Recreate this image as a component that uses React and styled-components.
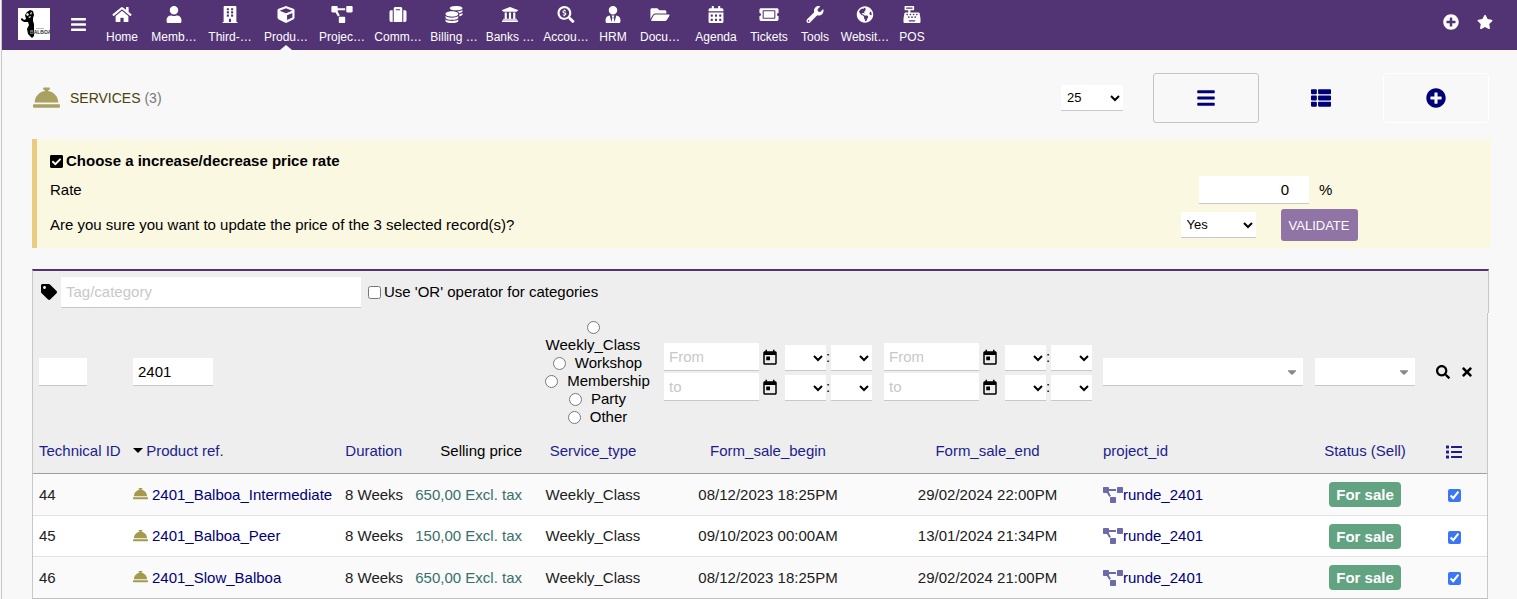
import React, { useState } from "react";
import styled, { createGlobalStyle } from "styled-components";
import {
  FaBars,
  FaBuilding,
  FaCalendarAlt,
  FaCaretDown,
  FaCashRegister,
  FaCheckSquare,
  FaCoins,
  FaConciergeBell,
  FaCube,
  FaFolderOpen,
  FaGlobeAmericas,
  FaHome,
  FaList,
  FaPlusCircle,
  FaProjectDiagram,
  FaSearch,
  FaSearchDollar,
  FaStar,
  FaSuitcase,
  FaTag,
  FaThList,
  FaTicketAlt,
  FaTimes,
  FaUniversity,
  FaUser,
  FaUserTie,
  FaWrench,
} from "react-icons/fa";
import { MdToday } from "react-icons/md";

const MENU = [
  { label: "Home", icon: FaHome, width: 48 },
  { label: "Memb…", icon: FaUser, width: 56 },
  { label: "Third-…", icon: FaBuilding, width: 56 },
  { label: "Produ…", icon: FaCube, width: 56, active: true },
  { label: "Projec…", icon: FaProjectDiagram, width: 56 },
  { label: "Comm…", icon: FaSuitcase, width: 56 },
  { label: "Billing …", icon: FaCoins, width: 56 },
  { label: "Banks …", icon: FaUniversity, width: 56 },
  { label: "Accou…", icon: FaSearchDollar, width: 56 },
  { label: "HRM", icon: FaUserTie, width: 38 },
  { label: "Docu…", icon: FaFolderOpen, width: 56 },
  { label: "Agenda", icon: FaCalendarAlt, width: 56 },
  { label: "Tickets", icon: FaTicketAlt, width: 50 },
  { label: "Tools", icon: FaWrench, width: 42 },
  { label: "Websit…", icon: FaGlobeAmericas, width: 58 },
  { label: "POS", icon: FaCashRegister, width: 36 },
];

const SERVICE_TYPES = ["Weekly_Class", "Workshop", "Membership", "Party", "Other"];

const SERVICES = [
  { id: 44, ref: "2401_Balboa_Intermediate", price: "650,00", begin: "08/12/2023 18:25PM", end: "29/02/2024 22:00PM" },
  { id: 45, ref: "2401_Balboa_Peer", price: "150,00", begin: "09/10/2023 00:00AM", end: "13/01/2024 21:34PM" },
  { id: 46, ref: "2401_Slow_Balboa", price: "650,00", begin: "08/12/2023 18:25PM", end: "29/02/2024 21:00PM" },
];

export default function App() {
  const [selected, setSelected] = useState([44, 45, 46]);

  const toggle = (id) =>
    setSelected(selected.includes(id) ? selected.filter((s) => s !== id) : [...selected, id]);

  return (
    <>
      <GlobalStyle />
      <Page>
        <TopBar>
          <Logo />
          <BurgerButton type="button" aria-label="Toggle menu">
            <FaBars />
          </BurgerButton>
          <Menu>
            {MENU.map(({ label, icon: Icon, width, active }) => (
              <MenuItem key={label} href="#" $width={width} $active={active}>
                <Icon />
                <span>{label}</span>
              </MenuItem>
            ))}
          </Menu>
          <TopTools>
            <TopButton type="button" aria-label="Quick add"><FaPlusCircle /></TopButton>
            <TopButton type="button" aria-label="Bookmarks"><FaStar /></TopButton>
          </TopTools>
        </TopBar>

        <Content>
          {/* Title and view modes */}
          <TitleBar>
            <FaConciergeBell />
            <Title>SERVICES <Count>(3)</Count></Title>
            <Select $width={62} aria-label="Rows per page" defaultValue="25">
              <option>25</option>
            </Select>
            <ViewModes>
              <ModeButton type="button" aria-label="List view" $border="#c4c4c4"><FaBars /></ModeButton>
              <ModeButton type="button" aria-label="Kanban view" $border="transparent"><FaThList /></ModeButton>
              <ModeButton type="button" aria-label="New service" $border="#fff"><FaPlusCircle /></ModeButton>
            </ViewModes>
          </TitleBar>

          {/* Mass action confirmation */}
          <Confirm>
            <ConfirmTitle><FaCheckSquare /> Choose a increase/decrease price rate</ConfirmTitle>
            <ConfirmRow $height={36}>
              <label htmlFor="rate">Rate</label>
              <ConfirmFields $gap={10}>
                <RateInput id="rate" defaultValue="0" />
                <Unit>%</Unit>
              </ConfirmFields>
            </ConfirmRow>
            <ConfirmRow $height={34}>
              <label htmlFor="confirm">Are you sure you want to update the price of the 3 selected record(s)?</label>
              <ConfirmFields $gap={25}>
                <Select id="confirm" $width={75} defaultValue="Yes">
                  <option>Yes</option>
                  <option>No</option>
                </Select>
                <ValidateButton type="button">VALIDATE</ValidateButton>
              </ConfirmFields>
            </ConfirmRow>
          </Confirm>

          {/* List */}
          <CategoryBar>
            <FaTag />
            <CategoryInput placeholder="Tag/category" aria-label="Tag/category" />
            <CheckLabel>
              <input type="checkbox" />
              Use 'OR' operator for categories
            </CheckLabel>
          </CategoryBar>
          <Table>
            <colgroup>
              <Col $width={94} />
              <Col $width={212} />
              <Col $width={69} />
              <Col $width={120} />
              <Col $width={130} />
              <Col $width={220} />
              <Col $width={219} />
              <Col />
              <Col $width={112} />
              <Col $width={66} />
            </colgroup>
            <thead>
              <FilterRow>
                <Cell><TextInput $width={48} aria-label="Technical ID" /></Cell>
                <Cell><TextInput $width={80} aria-label="Product ref." defaultValue="2401" /></Cell>
                <Cell />
                <Cell />
                <Cell $align="center">
                  {SERVICE_TYPES.map((type) => (
                    <RadioLabel key={type}>
                      <input type="radio" name="service_type" />{type}
                    </RadioLabel>
                  ))}
                </Cell>
                <Cell><DateRange name="Form_sale_begin" /></Cell>
                <Cell><DateRange name="Form_sale_end" /></Cell>
                <Cell><SearchSelect label="project_id" /></Cell>
                <Cell><SearchSelect label="Status (Sell)" /></Cell>
                <Cell>
                  <FilterActions>
                    <IconButton type="button" aria-label="Search"><FaSearch /></IconButton>
                    <IconButton type="button" aria-label="Clear filters"><FaTimes /></IconButton>
                  </FilterActions>
                </Cell>
              </FilterRow>
              <HeadRow>
                <Cell as="th"><HeadLink href="#">Technical ID</HeadLink></Cell>
                <Cell as="th"><SortArrow /> <HeadLink href="#">Product ref.</HeadLink></Cell>
                <Cell as="th" $align="right"><HeadLink href="#">Duration</HeadLink></Cell>
                <Cell as="th" $align="right">Selling price</Cell>
                <Cell as="th" $align="center"><HeadLink href="#">Service_type</HeadLink></Cell>
                <Cell as="th" $align="center"><HeadLink href="#">Form_sale_begin</HeadLink></Cell>
                <Cell as="th" $align="center"><HeadLink href="#">Form_sale_end</HeadLink></Cell>
                <Cell as="th"><HeadLink href="#">project_id</HeadLink></Cell>
                <Cell as="th" $align="center"><HeadLink href="#">Status (Sell)</HeadLink></Cell>
                <Cell as="th" $align="center"><ColumnsButton type="button" aria-label="Choose columns"><FaList /></ColumnsButton></Cell>
              </HeadRow>
            </thead>
            <tbody>
              {SERVICES.map((s) => (
                <Row key={s.id}>
                  <Cell>{s.id}</Cell>
                  <Cell><RefLink href="#"><FaConciergeBell />{s.ref}</RefLink></Cell>
                  <Cell $align="right">8 Weeks</Cell>
                  <Cell $align="right"><Amount>{s.price} Excl. tax</Amount></Cell>
                  <Cell $align="center">Weekly_Class</Cell>
                  <Cell $align="center">{s.begin}</Cell>
                  <Cell $align="center">{s.end}</Cell>
                  <Cell><ProjectLink href="#"><FaProjectDiagram />runde_2401</ProjectLink></Cell>
                  <Cell $align="center"><Badge>For sale</Badge></Cell>
                  <Cell $align="center">
                    <RowCheck
                      type="checkbox"
                      aria-label={`Select ${s.ref}`}
                      checked={selected.includes(s.id)}
                      onChange={() => toggle(s.id)}
                    />
                  </Cell>
                </Row>
              ))}
            </tbody>
          </Table>
        </Content>
      </Page>
    </>
  );
}

function Logo() {
  return (
    <LogoLink href="#" aria-label="Balboa">
      <svg viewBox="0 0 32 32">
        <rect width="32" height="32" fill="#fff" />
        <path d="M3 11l1-1 2 2 2-1-1-4 2-3 3-2 3 1 1 4-1 3 0 3 1 3v12l-2 2-1-1-3-3-1-5 2-4-1-3-4 0-3-2z" fill="#000" />
        <path d="M8 6l2-1 1 2-2 1zM12 5l2-1-1 3zM10 9l3-1-1 2z" fill="#fff" />
        <path d="M18 20.500h8" stroke="#bbb" strokeWidth="1" />
        <text x="12" y="26" fontSize="5" fontWeight="bold" fontFamily="Liberation Sans, sans-serif" fill="#333">
          <tspan fill="#999">B</tspan>ALBOA
        </text>
      </svg>
    </LogoLink>
  );
}

function DateRange({ name }) {
  return (
    <DateLines>
      {["From", "to"].map((bound) => (
        <DateLine key={bound}>
          <TextInput $width={95} placeholder={bound} aria-label={`${name} ${bound}`} />
          <CalendarButton type="button" aria-label={`Pick ${name} ${bound}`}><MdToday /></CalendarButton>
          <Select $width={41} aria-label={`${name} ${bound} hour`} />
          <Colon>:</Colon>
          <Select $width={41} aria-label={`${name} ${bound} minute`} />
        </DateLine>
      ))}
    </DateLines>
  );
}

function SearchSelect({ label }) {
  return (
    <SearchSelectBox>
      <select aria-label={label} />
      <FaCaretDown />
    </SearchSelectBox>
  );
}

const GlobalStyle = createGlobalStyle`
  * {
    box-sizing: border-box;
  }
  body {
    margin: 0;
    background: #f8f8f8;
    color: #000;
    font: 15px/18px "Liberation Sans", Arial, sans-serif;
  }
  input, select, button {
    font-family: inherit;
    margin: 0;
  }
  button {
    border: 0;
    padding: 0;
    background: none;
    color: #000;
    cursor: pointer;
  }
  a {
    color: #000078;
    text-decoration: none;
  }
  svg {
    display: block;
  }
`;

const Page = styled.div`
  margin-left: 1px;
  border-left: 1px solid #c8c8c8;
`;

const TopBar = styled.header`
  display: flex;
  align-items: center;
  height: 50px;
  padding: 0 24px 0 16px;
  background: #523474;
`;

const LogoLink = styled.a`
  width: 32px;
  margin-right: 20px;
  padding-bottom: 2px;
`;

const BurgerButton = styled.button`
  width: 17px;
  margin-right: 11px;
  padding-bottom: 2px;
  color: #fff;
  font-size: 17px;
`;

const Menu = styled.nav`
  display: flex;
  align-self: stretch;
`;

const MenuItem = styled.a`
  position: relative;
  display: flex;
  flex-direction: column;
  align-items: center;
  gap: 6px;
  width: ${(props) => props.$width}px;
  padding-top: 6px;
  color: #fff;
  font-size: 12px;
  line-height: 16px;
  white-space: nowrap;
  svg {
    width: 22px;
    height: 17px;
  }
  &::after {
    content: "";
    display: ${(props) => (props.$active ? "block" : "none")};
    position: absolute;
    bottom: 0;
    border: 6px solid transparent;
    border-top: 0;
    border-bottom: 5px solid #f8f8f8;
  }
`;

const TopTools = styled.div`
  display: flex;
  gap: 18px;
  margin-left: auto;
  padding-bottom: 6px;
`;

const TopButton = styled.button`
  color: #fff;
  font-size: 16px;
`;

const Content = styled.main`
  padding: 23px 26px 0 30px;
`;

const TitleBar = styled.div`
  display: flex;
  align-items: center;
  margin: 0 2px 16px 0;
  > svg {
    color: #aaa060;
    width: 29px;
    height: 29px;
    margin-right: 9px;
    padding-bottom: 2px;
  }
`;

const Title = styled.h1`
  flex: 1;
  margin: 0;
  color: #4a4408;
  font-size: 14px;
  font-weight: normal;
`;

const Count = styled.span`
  color: #777;
`;

const Select = styled.select`
  width: ${(props) => props.$width}px;
  height: 26px;
  border: 0;
  border-bottom: 1px solid #c8c8c8;
  border-radius: 0;
  padding: 0 2px;
  background-color: #fff;
  color: #000;
  font-size: 13px;
`;

const ViewModes = styled.div`
  display: flex;
  gap: 9px;
  margin-left: 30px;
`;

const ModeButton = styled.button`
  display: flex;
  align-items: center;
  justify-content: center;
  width: 106px;
  height: 50px;
  border: 1px solid ${(props) => props.$border};
  border-radius: 3px;
  color: #000078;
  font-size: 20px;
`;

const Confirm = styled.section`
  margin-bottom: 21px;
  padding: 9px 0 6px 13px;
  border-left: 5px solid #eacb82;
  background: #fbf8e2;
`;

const ConfirmTitle = styled.div`
  display: flex;
  align-items: center;
  gap: 3px;
  height: 26px;
  margin-bottom: -2px;
  font-weight: bold;
  svg {
    width: 13px;
  }
`;

const ConfirmRow = styled.div`
  display: flex;
  align-items: center;
  justify-content: space-between;
  height: ${(props) => props.$height}px;
`;

const ConfirmFields = styled.div`
  display: flex;
  align-items: center;
  justify-content: center;
  gap: ${(props) => props.$gap}px;
  width: 444px;
`;

const TextInput = styled.input`
  display: block;
  width: ${(props) => props.$width}px;
  height: 28px;
  border: 0;
  border-bottom: 1px solid #c8c8c8;
  padding: 0 5px;
  background: #fff;
  color: #000;
  font-size: 15px;
  &::placeholder {
    color: #c8c8c8;
  }
`;

const RateInput = styled(TextInput)`
  width: 110px;
  padding-right: 20px;
  text-align: right;
`;

const Unit = styled.span`
  width: 20px;
`;

const ValidateButton = styled.button`
  width: 77px;
  height: 32px;
  border-radius: 3px;
  background: #9074a5;
  color: #fff;
  font-size: 13px;
`;

const CategoryBar = styled.div`
  display: flex;
  align-items: center;
  height: 44px;
  margin-right: 2px;
  padding-left: 8px;
  border: 1px solid #c8c8c8;
  border-top: 2px solid #523474;
  border-bottom: 0;
  background: #eee;
  > svg {
    font-size: 16px;
    margin-right: 4px;
  }
`;

const CategoryInput = styled(TextInput)`
  width: 300px;
  height: 31px;
`;

const CheckLabel = styled.label`
  display: flex;
  align-items: center;
  gap: 3px;
  margin-left: 7px;
`;

const Table = styled.table`
  width: calc(100% - 3px);
  table-layout: fixed;
  border-collapse: separate;
  border-spacing: 0;
  border: 1px solid #c8c8c8;
  border-top: 0;
  border-bottom: 0;
  thead {
    background: #eee;
  }
`;

const Col = styled.col`
  width: ${(props) => (props.$width ? `${props.$width}px` : "auto")};
`;

const Cell = styled.td`
  padding: 0 6px;
  text-align: ${(props) => props.$align || "left"};
  font-weight: normal;
  white-space: nowrap;
`;

const FilterRow = styled.tr`
  height: 118px;
`;

const HeadRow = styled.tr`
  th {
    height: 43px;
    padding-bottom: 2px;
    border-bottom: 1px solid #a0a0a0;
  }
`;

const SortArrow = styled.span`
  display: inline-block;
  border: 5px solid transparent;
  border-top-color: #000;
  border-bottom: 0;
  margin-right: -1px;
  vertical-align: 3px;
`;

const HeadLink = styled.a`
  color: #1c1c8c;
`;

const Row = styled.tr`
  background: #fafafa;
  color: #202020;
  td {
    height: 42px;
    border-bottom: 1px solid #e2e2e2;
  }
  &:nth-child(even) {
    background: #fff;
    td {
      height: 41px;
    }
  }
  &:last-child td {
    border-bottom-color: #c0c0c0;
  }
`;

const RadioLabel = styled.label`
  display: block;
  white-space: normal;
  input {
    margin: 0 9px 2px;
    vertical-align: middle;
  }
`;

const DateLines = styled.div`
  display: grid;
  gap: 2px;
`;

const DateLine = styled.div`
  display: flex;
  align-items: flex-end;
`;

const CalendarButton = styled.button`
  margin: 0 6px 4px 2px;
  font-size: 18px;
`;

const Colon = styled.span`
  width: 5px;
  padding-bottom: 5px;
`;

const SearchSelectBox = styled.div`
  display: grid;
  align-items: center;
  > * {
    grid-area: 1 / 1;
  }
  select {
    width: 100%;
    height: 28px;
    appearance: none;
    border: 0;
    border-bottom: 1px solid #c8c8c8;
    border-radius: 0;
    background: #fff;
  }
  svg {
    justify-self: end;
    margin-right: 4px;
    color: #888;
    font-size: 14px;
    pointer-events: none;
  }
`;

const FilterActions = styled.div`
  display: flex;
  justify-content: center;
  gap: 10px;
  padding-left: 2px;
`;

const IconButton = styled.button`
  font-size: 14px;
`;

const ColumnsButton = styled.button`
  color: #1c1c8c;
  font-size: 16px;
  vertical-align: middle;
`;

const RefLink = styled.a`
  display: flex;
  align-items: center;
  gap: 4px;
  svg {
    width: 15px;
    height: 17px;
    padding-bottom: 2px;
    color: #a39a4e;
  }
`;

const Amount = styled.span`
  color: #37706c;
`;

const ProjectLink = styled.a`
  display: flex;
  align-items: center;
  svg {
    width: 20px;
    height: 16px;
    color: #6c6aa8;
  }
`;

const Badge = styled.span`
  display: inline-block;
  padding: 3px 7px;
  border-radius: 4px;
  background: #62a381;
  color: #fff;
  font-weight: bold;
  line-height: 19px;
`;

const RowCheck = styled.input`
  accent-color: #3b76f6;
  vertical-align: middle;
`;
